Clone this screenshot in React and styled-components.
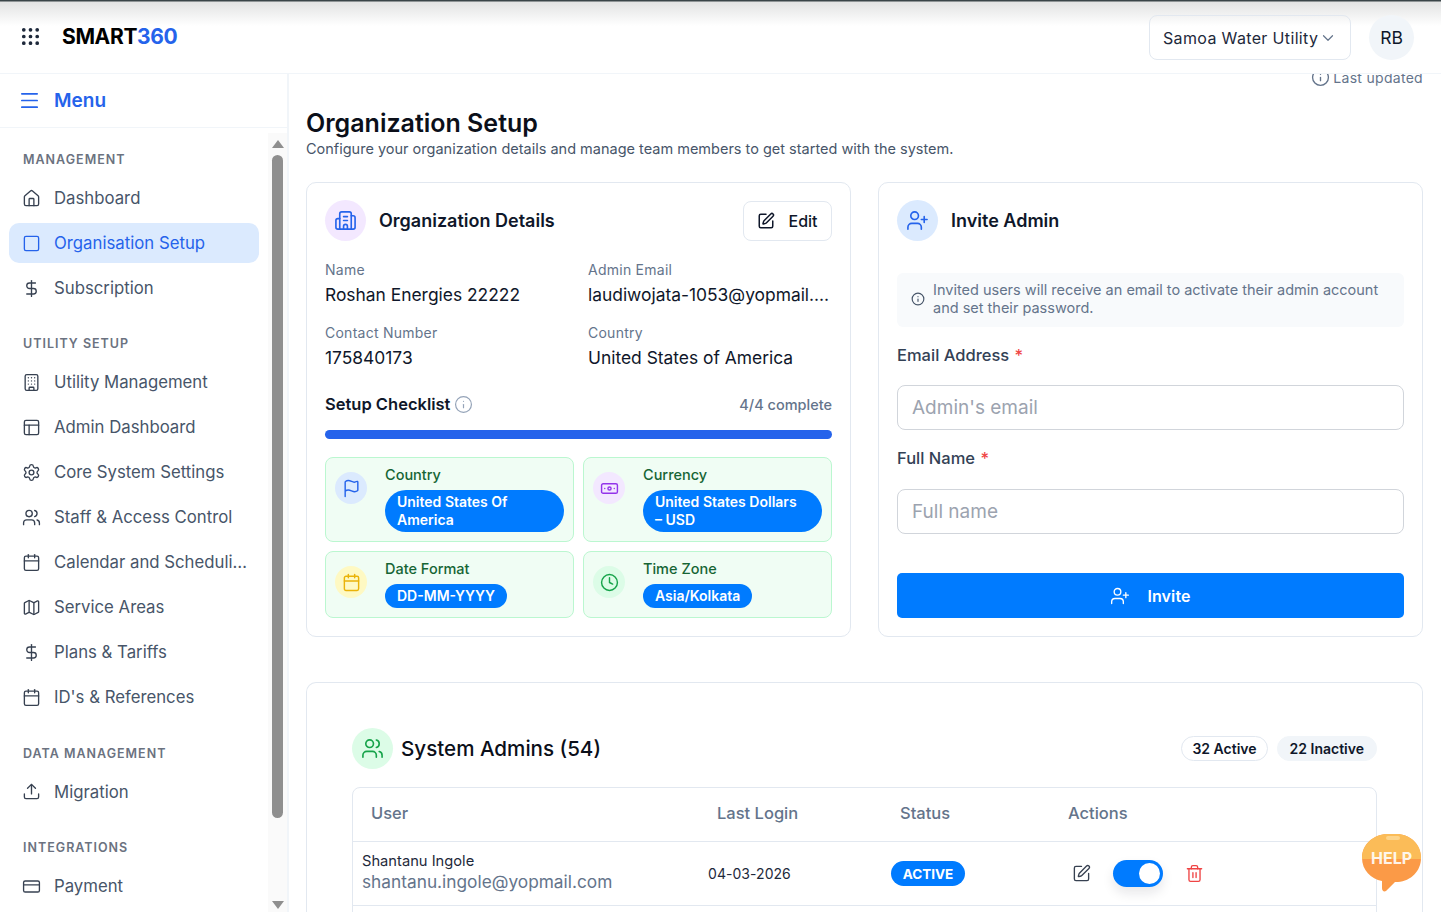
import React from "react";
import styled, { createGlobalStyle } from "styled-components";
import {
  Banknote,
  Building,
  Building2,
  Calendar,
  ChevronDown,
  Clock,
  CreditCard,
  DollarSign,
  Flag,
  Grip,
  House,
  Info,
  Map,
  Menu,
  PanelsTopLeft,
  Settings,
  Square,
  SquarePen,
  Trash2,
  Upload,
  UserPlus,
  Users,
} from "lucide-react";

const GlobalStyle = createGlobalStyle`
  html, body {
    margin: 0;
    padding: 0;
    height: 912px;
    overflow: hidden;
    background: #fff;
    font-family: "Inter", "Liberation Sans", sans-serif;
    color: #0f172a;
  }
  * { box-sizing: border-box; }
`;

const Page = styled.div`
  width: 1441px;
  height: 912px;
  display: flex;
  flex-direction: column;
  overflow: hidden;
  position: relative;
`;

const Header = styled.header`
  height: 74px;
  flex-shrink: 0;
  display: flex;
  align-items: center;
  justify-content: space-between;
  padding: 0 27px 0 19px;
  background: linear-gradient(#3a4548 0, #3a4548 1px, #e2e3e3 2px, #fff 26px);
  border-bottom: 1px solid #f1f5f9;
  position: relative;
  z-index: 2;
`;

const Brand = styled.div`
  display: flex;
  align-items: center;
  gap: 20px;
  color: #1e293b;
`;

const Logo = styled.div`
  font-size: 21px;
  font-weight: 700;
  color: #000;
  letter-spacing: -0.35px;
  span { color: #2563eb; }
`;

const HeaderRight = styled.div`
  display: flex;
  align-items: center;
  gap: 18px;
  margin-top: 2px;
`;

const UtilitySelect = styled.div`
  width: 202px;
  height: 45px;
  border: 1px solid #e2e8f0;
  border-radius: 8px;
  display: flex;
  align-items: center;
  padding-left: 13px;
  gap: 1px;
  font-size: 16px;
  letter-spacing: 0.35px;
  color: #1e293b;
  svg { color: #64748b; }
`;

const Avatar = styled.div`
  width: 45px;
  height: 45px;
  border-radius: 50%;
  background: #f1f5f9;
  display: flex;
  align-items: center;
  justify-content: center;
  font-size: 17.5px;
`;

const Body = styled.div`
  flex: 1;
  display: flex;
  min-height: 0;
`;

const Sidebar = styled.aside`
  width: 289px;
  flex-shrink: 0;
  border-right: 2px solid #f1f5f9;
  display: flex;
  flex-direction: column;
`;

const MenuHead = styled.div`
  height: 54px;
  flex-shrink: 0;
  display: flex;
  align-items: center;
  gap: 13px;
  padding-left: 18px;
  border-bottom: 1px solid #f1f5f9;
  color: #2563eb;
  font-size: 19px;
  font-weight: 600;
`;

const SideBody = styled.div`
  flex: 1;
  min-height: 0;
  display: flex;
`;

const Nav = styled.nav`
  flex: 1;
  padding: 22px 9px 0;
  overflow: hidden;
`;

const NavLabel = styled.div`
  height: 20px;
  line-height: 20px;
  padding-left: 14px;
  margin: ${(p) => (p.$first ? "0 0 8px" : "26.4px 0 8px")};
  font-size: 12.5px;
  font-weight: 600;
  letter-spacing: 1px;
  color: #6b7280;
`;

const NavItem = styled.div`
  width: 250px;
  height: 40px;
  margin-bottom: 5px;
  display: flex;
  align-items: center;
  gap: 13px;
  padding-left: 13px;
  border-radius: 10px;
  font-size: 16.75px;
  white-space: nowrap;
  overflow: hidden;
  color: ${(p) => (p.$active ? "#2563eb" : "#475569")};
  background: ${(p) => (p.$active ? "#dbeafe" : "transparent")};
  svg { color: ${(p) => (p.$active ? "#2563eb" : "#374151")}; flex-shrink: 0; }
`;

const ScrollTrack = styled.div`
  width: 19px;
  flex-shrink: 0;
  margin-top: 5px;
  background: #fafafa;
  display: flex;
  flex-direction: column;
  align-items: center;
  padding: 7px 0 3px;
`;

const ScrollThumb = styled.div`
  width: 11px;
  height: 663px;
  margin-top: 7px;
  border-radius: 6px;
  background: #8f8f8f;
`;

const Arrow = styled.div`
  width: 0;
  height: 0;
  border-left: 6.5px solid transparent;
  border-right: 6.5px solid transparent;
  ${(p) => (p.$down ? "border-top: 8px solid #8f8f8f; margin-top: auto;" : "border-bottom: 8px solid #8f8f8f;")}
`;

const Main = styled.main`
  flex: 1;
  min-width: 0;
  padding: 0 18px 0 17px;
  overflow: hidden;
`;

const Updated = styled.div`
  display: flex;
  justify-content: flex-end;
  align-items: center;
  gap: 3px;
  height: 6px;
  font-size: 14px;
  letter-spacing: 0.3px;
  color: #64748b;
  margin-bottom: 27px;
  svg { flex-shrink: 0; }
`;

const PageTitle = styled.h1`
  margin: 0;
  font-size: 25px;
  line-height: 32px;
  font-weight: 600;
  color: #0b0f19;
`;

const PageSub = styled.p`
  margin: 0 0 23px;
  font-size: 14.5px;
  line-height: 20px;
  color: #475569;
`;

const TwoCols = styled.div`
  display: grid;
  grid-template-columns: 545px 545px;
  gap: 27px;
  margin-bottom: 45px;
`;

const Card = styled.section`
  height: ${(p) => p.$height || "auto"};
  border: 1px solid #e2e8f0;
  border-radius: 10px;
  padding: 17px 18px 18px;
  background: #fff;
`;

const CardHead = styled.div`
  display: flex;
  align-items: center;
  gap: 13px;
  height: 41px;
`;

const IconCircle = styled.div`
  width: ${(p) => p.$size || 41}px;
  height: ${(p) => p.$size || 41}px;
  border-radius: 50%;
  flex-shrink: 0;
  display: flex;
  align-items: center;
  justify-content: center;
  background: ${(p) => p.$bg};
  color: ${(p) => p.$fg};
`;

const CardTitle = styled.h2`
  margin: 0;
  flex: 1;
  font-size: 18px;
  font-weight: 600;
  color: #0f172a;
`;

const EditBtn = styled.button`
  width: 89px;
  height: 40px;
  border: 1px solid #e2e8f0;
  border-radius: 8px;
  background: #fff;
  display: flex;
  align-items: center;
  justify-content: center;
  gap: 13px;
  font: 500 16px "Inter", sans-serif;
  color: #0f172a;
`;

const Fields = styled.div`
  display: grid;
  grid-template-columns: 263px 245px;
  row-gap: 13px;
  margin-top: 19px;
`;

const Field = styled.div`
  min-width: 0;
`;

const FieldLabel = styled.div`
  font-size: 14px;
  line-height: 20px;
  letter-spacing: 0.25px;
  color: #64748b;
`;

const FieldValue = styled.div`
  font-size: 17.4px;
  line-height: 30px;
  color: #0f172a;
  white-space: nowrap;
  overflow: hidden;
  text-overflow: ellipsis;
`;

const CheckHead = styled.div`
  display: flex;
  align-items: center;
  justify-content: space-between;
  margin-top: 19px;
  height: 24px;
`;

const CheckTitle = styled.div`
  display: flex;
  align-items: center;
  gap: 4px;
  font-size: 16.5px;
  font-weight: 600;
  svg { color: #94a3b8; }
`;

const CheckCount = styled.div`
  font-size: 14.5px;
  font-weight: 500;
  color: #64748b;
`;

const Progress = styled.div`
  height: 9px;
  margin: 14px 0 18px;
  border-radius: 5px;
  background: #2563eb;
`;

const Tiles = styled.div`
  display: grid;
  grid-template-columns: 249px 249px;
  grid-auto-rows: auto;
  gap: 9px;
`;

const Tile = styled.div`
  display: flex;
  gap: 18px;
  padding: 7px 9px 9px;
  min-height: ${(p) => (p.$tall ? 85 : 67)}px;
  border: 1px solid #bbf7d0;
  border-radius: 8px;
  background: #f0fdf4;
`;

const TileIcon = styled(IconCircle)`
  margin-top: 7px;
`;

const TileText = styled.div`
  flex: 1;
  min-width: 0;
`;

const TileLabel = styled.div`
  font-size: 14.5px;
  line-height: 20px;
  font-weight: 500;
  color: #166534;
  margin-bottom: 5px;
`;

const Pill = styled.div`
  display: ${(p) => (p.$wrap ? "block" : "inline-block")};
  padding: 3px 12px;
  border-radius: 21px;
  background: #007bff;
  color: #fff;
  font-size: 14px;
  line-height: 18px;
  font-weight: 600;
`;

const Notice = styled.div`
  display: flex;
  align-items: center;
  gap: 8px;
  height: 54px;
  margin-top: 32px;
  padding: 0 14px 2px;
  border-radius: 6px;
  background: #f8fafc;
  font-size: 14.5px;
  line-height: 18px;
  color: #64748b;
  svg { flex-shrink: 0; color: #475569; }
`;

const FormLabel = styled.div`
  font-size: 16.5px;
  line-height: 24px;
  font-weight: 500;
  color: #334155;
  margin: ${(p) => p.$top}px 0 ${(p) => p.$bottom}px;
  span { color: #ef4444; margin-left: 1px; }
`;

const Input = styled.input`
  display: block;
  width: 100%;
  height: 45px;
  padding: 0 14px;
  border: 1px solid #d1d5db;
  border-radius: 8px;
  font: 400 19px "Inter", sans-serif;
  outline: none;
  &::placeholder { color: #9ca3af; opacity: 1; }
`;

const InviteBtn = styled.button`
  width: 100%;
  height: 45px;
  margin-top: 39px;
  border: 0;
  border-radius: 5px;
  background: #007bff;
  color: #fff;
  display: flex;
  align-items: center;
  justify-content: center;
  gap: 17px;
  font: 600 16px "Inter", sans-serif;
  letter-spacing: 0.1px;
`;

const AdminsCard = styled(Card)`
  padding: 45px 45px 0;
  border-bottom: 0;
  border-radius: 10px 10px 0 0;
`;

const AdminsHead = styled.div`
  display: flex;
  align-items: center;
  height: 41px;
  gap: 8px;
  margin-bottom: 18px;
`;

const AdminsTitle = styled.h2`
  margin: 0;
  flex: 1;
  font-size: 20.6px;
  font-weight: 500;
  color: #0b0f19;
`;

const CountChip = styled.div`
  height: 25px;
  margin-left: ${(p) => (p.$filled ? 1 : 0)}px;
  display: flex;
  align-items: center;
  padding: 0 ${(p) => (p.$filled ? 12 : 10)}px;
  border-radius: 13px;
  font-size: 14px;
  font-weight: 600;
  border: 1px solid ${(p) => (p.$filled ? "#f1f5f9" : "#e2e8f0")};
  background: ${(p) => (p.$filled ? "#f1f5f9" : "#fff")};
`;

const Table = styled.div`
  min-height: 140px;
  border: 1px solid #e2e8f0;
  border-radius: 8px 8px 0 0;
`;

const Row = styled.div`
  display: grid;
  grid-template-columns: 346px 183px 168px 1fr;
  align-items: center;
  height: ${(p) => p.$height}px;
  border-bottom: 1px solid #e2e8f0;
`;

const HeadCell = styled.div`
  padding: 0 0 3px 18px;
  font-size: 16.5px;
  font-weight: 500;
  color: #64748b;
`;

const UserCell = styled.div`
  padding: 0 0 4px 9px;
  white-space: nowrap;
`;

const UserName = styled.div`
  font-size: 14.7px;
  line-height: 20px;
  color: #1e293b;
`;

const UserMail = styled.div`
  font-size: 17.3px;
  line-height: 21px;
  color: #64748b;
`;

const DateCell = styled.div`
  padding-left: 9px;
  font-size: 14px;
  letter-spacing: 0.05px;
  color: #1e293b;
`;

const StatusCell = styled.div`
  padding-left: 9px;
`;

const StatusPill = styled.span`
  display: inline-flex;
  align-items: center;
  justify-content: center;
  width: 74px;
  height: 25px;
  border-radius: 13px;
  background: #007bff;
  color: #fff;
  font-size: 13.5px;
  font-weight: 700;
`;

const Actions = styled.div`
  display: flex;
  align-items: center;
  padding-left: 22px;
  gap: 22px;
`;

const Toggle = styled.div`
  width: 50px;
  height: 27px;
  border-radius: 14px;
  padding: 3px;
  display: flex;
  justify-content: flex-end;
  background: #007bff;
  box-shadow: 0 6px 12px rgba(15, 23, 42, 0.1);
  &::after {
    content: "";
    width: 21px;
    height: 21px;
    border-radius: 50%;
    background: #fff;
  }
`;

const HelpBadge = styled.svg`
  position: absolute;
  left: 1362px;
  top: 833px;
  z-index: 3;
`;

const sections = [
  {
    label: "MANAGEMENT",
    items: [
      { icon: House, text: "Dashboard" },
      { icon: Square, text: "Organisation Setup", active: true },
      { icon: DollarSign, text: "Subscription" },
    ],
  },
  {
    label: "UTILITY SETUP",
    items: [
      { icon: Building, text: "Utility Management" },
      { icon: PanelsTopLeft, text: "Admin Dashboard" },
      { icon: Settings, text: "Core System Settings" },
      { icon: Users, text: "Staff & Access Control" },
      { icon: Calendar, text: "Calendar and Scheduli…" },
      { icon: Map, text: "Service Areas" },
      { icon: DollarSign, text: "Plans & Tariffs" },
      { icon: Calendar, text: "ID's & References" },
    ],
  },
  {
    label: "DATA MANAGEMENT",
    items: [{ icon: Upload, text: "Migration" }],
  },
  {
    label: "INTEGRATIONS",
    items: [{ icon: CreditCard, text: "Payment" }],
  },
];

const App = () => {
  return (
    <Page>
      <GlobalStyle />
      <Header>
        <Brand>
          <Grip size={23} strokeWidth={1.9} />
          <Logo>
            SMART<span>360</span>
          </Logo>
        </Brand>
        <HeaderRight>
          <UtilitySelect>
            Samoa Water Utility
            <ChevronDown size={18} strokeWidth={1.6} />
          </UtilitySelect>
          <Avatar>RB</Avatar>
        </HeaderRight>
      </Header>

      <Body>
        <Sidebar>
          <MenuHead>
            <Menu size={23} strokeWidth={1.8} />
            Menu
          </MenuHead>
          <SideBody>
            <Nav>
              {sections.map((section, i) => (
                <div key={section.label}>
                  <NavLabel $first={i === 0}>{section.label}</NavLabel>
                  {section.items.map((item) => (
                    <NavItem key={item.text} $active={item.active}>
                      <item.icon size={19} strokeWidth={1.7} />
                      {item.text}
                    </NavItem>
                  ))}
                </div>
              ))}
            </Nav>
            <ScrollTrack>
              <Arrow />
              <ScrollThumb />
              <Arrow $down />
            </ScrollTrack>
          </SideBody>
        </Sidebar>

        <Main>
          <Updated>
            <Info size={19} strokeWidth={1.7} />
            Last updated
          </Updated>
          <PageTitle>Organization Setup</PageTitle>
          <PageSub>
            Configure your organization details and manage team members to get
            started with the system.
          </PageSub>

          <TwoCols>
            <Card $height="455px">
              <CardHead>
                <IconCircle $bg="#f3e8ff" $fg="#2563eb">
                  <Building2 size={23} strokeWidth={1.7} />
                </IconCircle>
                <CardTitle>Organization Details</CardTitle>
                <EditBtn>
                  <SquarePen size={18} />
                  Edit
                </EditBtn>
              </CardHead>

              <Fields>
                <Field>
                  <FieldLabel>Name</FieldLabel>
                  <FieldValue>Roshan Energies 22222</FieldValue>
                </Field>
                <Field>
                  <FieldLabel>Admin Email</FieldLabel>
                  <FieldValue>laudiwojata-1053@yopmail.com</FieldValue>
                </Field>
                <Field>
                  <FieldLabel>Contact Number</FieldLabel>
                  <FieldValue>175840173</FieldValue>
                </Field>
                <Field>
                  <FieldLabel>Country</FieldLabel>
                  <FieldValue>United States of America</FieldValue>
                </Field>
              </Fields>

              <CheckHead>
                <CheckTitle>
                  Setup Checklist
                  <Info size={19} strokeWidth={1.5} />
                </CheckTitle>
                <CheckCount>4/4 complete</CheckCount>
              </CheckHead>
              <Progress />

              <Tiles>
                <Tile $tall>
                  <TileIcon $size={32} $bg="#dbeafe" $fg="#2563eb">
                    <Flag size={19} strokeWidth={1.8} />
                  </TileIcon>
                  <TileText>
                    <TileLabel>Country</TileLabel>
                    <Pill $wrap>United States Of America</Pill>
                  </TileText>
                </Tile>
                <Tile $tall>
                  <TileIcon $size={32} $bg="#f3e8ff" $fg="#9333ea">
                    <Banknote size={19} strokeWidth={1.8} />
                  </TileIcon>
                  <TileText>
                    <TileLabel>Currency</TileLabel>
                    <Pill $wrap>
                      United States Dollars
                      <br />– USD
                    </Pill>
                  </TileText>
                </Tile>
                <Tile>
                  <TileIcon $size={32} $bg="#fef9c3" $fg="#eab308">
                    <Calendar size={19} strokeWidth={1.8} />
                  </TileIcon>
                  <TileText>
                    <TileLabel>Date Format</TileLabel>
                    <Pill>DD-MM-YYYY</Pill>
                  </TileText>
                </Tile>
                <Tile>
                  <TileIcon $size={32} $bg="#dcfce7" $fg="#16a34a">
                    <Clock size={19} strokeWidth={1.8} />
                  </TileIcon>
                  <TileText>
                    <TileLabel>Time Zone</TileLabel>
                    <Pill>Asia/Kolkata</Pill>
                  </TileText>
                </Tile>
              </Tiles>
            </Card>

            <Card $height="455px">
              <CardHead>
                <IconCircle $bg="#dbeafe" $fg="#2563eb">
                  <UserPlus size={23} strokeWidth={1.7} />
                </IconCircle>
                <CardTitle>Invite Admin</CardTitle>
              </CardHead>
              <Notice>
                <Info size={14} />
                Invited users will receive an email to activate their admin
                account and set their password.
              </Notice>
              <FormLabel $top={16} $bottom={18}>
                Email Address <span>*</span>
              </FormLabel>
              <Input placeholder="Admin's email" />
              <FormLabel $top={16} $bottom={19}>
                Full Name <span>*</span>
              </FormLabel>
              <Input placeholder="Full name" />
              <InviteBtn>
                <UserPlus size={20} strokeWidth={1.6} />
                Invite
              </InviteBtn>
            </Card>
          </TwoCols>

          <AdminsCard>
            <AdminsHead>
              <IconCircle $bg="#dcfce7" $fg="#16a34a">
                <Users size={23} strokeWidth={1.7} />
              </IconCircle>
              <AdminsTitle>System Admins (54)</AdminsTitle>
              <CountChip>32 Active</CountChip>
              <CountChip $filled>22 Inactive</CountChip>
            </AdminsHead>
            <Table>
              <Row $height={54}>
                <HeadCell>User</HeadCell>
                <HeadCell>Last Login</HeadCell>
                <HeadCell>Status</HeadCell>
                <HeadCell>Actions</HeadCell>
              </Row>
              <Row $height={64}>
                <UserCell>
                  <UserName>Shantanu Ingole</UserName>
                  <UserMail>shantanu.ingole@yopmail.com</UserMail>
                </UserCell>
                <DateCell>04-03-2026</DateCell>
                <StatusCell>
                  <StatusPill>ACTIVE</StatusPill>
                </StatusCell>
                <Actions>
                  <SquarePen size={19} strokeWidth={1.7} color="#374151" />
                  <Toggle />
                  <Trash2 size={19} strokeWidth={1.7} color="#ef4444" />
                </Actions>
              </Row>
            </Table>
          </AdminsCard>
        </Main>
      </Body>

      <HelpBadge width="60" height="60" viewBox="0 0 60 60">
        <path
          d="M26 1h8c14 0 25 10 25 24 0 13-10 23-23 24h-3l-9 9c-2 1-4 0-4-3v-7C9 46 0 37 0 25 0 11 12 1 26 1z"
          fill="#fb9a47"
        />
        <path
          d="M26 1h8c14 0 25 10 25 24v1H0v-1C0 11 12 1 26 1z"
          fill="#fbbc58"
        />
        <rect x="24" y="3" width="14" height="4" rx="2" fill="#fdd48a" />
        <text
          x="29.5"
          y="31"
          textAnchor="middle"
          fontFamily="Inter, sans-serif"
          fontSize="16"
          fontWeight="700"
          fill="#fff"
          fillOpacity="0.9"
        >
          HELP
        </text>
      </HelpBadge>
    </Page>
  );
};

export default App;
